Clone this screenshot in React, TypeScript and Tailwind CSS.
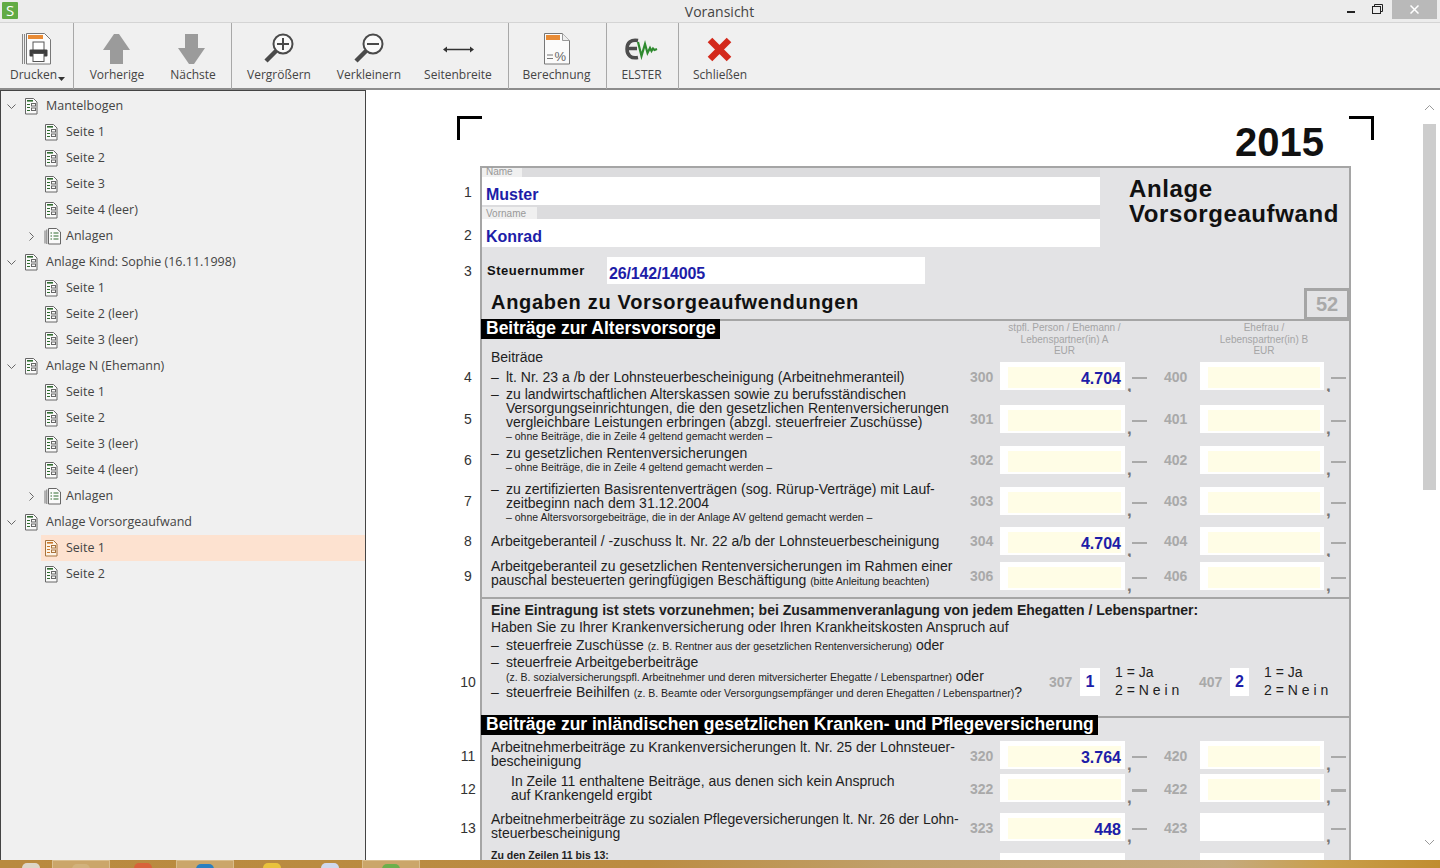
import React from "react";

const UI = "font-['Open_Sans',sans-serif]";

function PageIcon({ orange }: { orange?: boolean }) {
  const c = orange ? "#c9772a" : "#2f6b2f";
  const s = orange ? "#a8733c" : "#666";
  return (
    <svg width="14" height="17" viewBox="0 0 14 17" className="shrink-0">
      <path d="M1.5.5h8l3.5 3.5v12H1.5z" fill={orange ? "#fdf3e6" : "#fafafa"} stroke={s} />
      <rect x="3" y="2" width="6" height="1.6" fill={c} />
      <path d="M3 6.5h3M3 9.5h3M3 12.5h3" stroke={c} />
      <rect x="7.5" y="5.5" width="4" height="2.5" fill="none" stroke={s} />
      <rect x="7.5" y="10" width="4" height="2.5" fill="none" stroke={s} />
    </svg>
  );
}

function StackIcon() {
  return (
    <svg width="17" height="17" viewBox="0 0 17 17" className="shrink-0">
      <path d="M1 2.5v13M2.8 1.5v14.5" stroke="#777" fill="none" />
      <path d="M4.5.5h8l4 3.5v12h-12z" fill="#fafafa" stroke="#666" />
      <path d="M6.5 5h1.5M9.5 5h5M6.5 8h1.5M9.5 8h5M6.5 11h1.5M9.5 11h5" stroke="#2f6b2f" />
    </svg>
  );
}

function Chevron({ open }: { open?: boolean }) {
  return (
    <svg width="9" height="9" viewBox="0 0 9 9" className="shrink-0">
      <path d={open ? "M.5 2.5 4.5 6.5 8.5 2.5" : "M2.5.5 6.5 4.5 2.5 8.5"} fill="none" stroke="#666" strokeWidth="1" />
    </svg>
  );
}

type TreeRow = { label: string; kind: "root" | "page" | "group"; active?: boolean };

const tree: TreeRow[] = [
  { label: "Mantelbogen", kind: "root" },
  { label: "Seite 1", kind: "page" },
  { label: "Seite 2", kind: "page" },
  { label: "Seite 3", kind: "page" },
  { label: "Seite 4 (leer)", kind: "page" },
  { label: "Anlagen", kind: "group" },
  { label: "Anlage Kind: Sophie (16.11.1998)", kind: "root" },
  { label: "Seite 1", kind: "page" },
  { label: "Seite 2 (leer)", kind: "page" },
  { label: "Seite 3 (leer)", kind: "page" },
  { label: "Anlage N (Ehemann)", kind: "root" },
  { label: "Seite 1", kind: "page" },
  { label: "Seite 2", kind: "page" },
  { label: "Seite 3 (leer)", kind: "page" },
  { label: "Seite 4 (leer)", kind: "page" },
  { label: "Anlagen", kind: "group" },
  { label: "Anlage Vorsorgeaufwand", kind: "root" },
  { label: "Seite 1", kind: "page", active: true },
  { label: "Seite 2", kind: "page" },
];

function Sidebar() {
  return (
    <aside className={`w-[366px] shrink-0 border-x border-t border-[#444] bg-[#f0f0f0] pt-[2px] text-[12.5px] text-[#444] ${UI}`}>
      {tree.map((r, i) => (
        <div key={i} className="flex h-[26px] items-center">
          {r.kind === "root" && (
            <div className="flex items-center pl-[6px]">
              <Chevron open />
              <span className="ml-[8px]"><PageIcon /></span>
              <span className="ml-[8px]">{r.label}</span>
            </div>
          )}
          {r.kind === "page" && (
            <div className={`ml-[40px] flex h-full flex-1 items-center pl-[3px] ${r.active ? "bg-[#fde2d0]" : ""}`}>
              <PageIcon orange={r.active} />
              <span className="ml-[8px]">{r.label}</span>
            </div>
          )}
          {r.kind === "group" && (
            <div className="flex items-center pl-[26px]">
              <Chevron />
              <span className="ml-[8px]"><StackIcon /></span>
              <span className="ml-[5px]">{r.label}</span>
            </div>
          )}
        </div>
      ))}
    </aside>
  );
}

function Tool({ label, w, children, caret }: { label: string; w: string; children: React.ReactNode; caret?: boolean }) {
  return (
    <div className={`flex flex-col items-center ${w}`}>
      <div className="flex h-[37px] items-center justify-center">{children}</div>
      <div className="flex items-center text-[12px] leading-[16px] text-[#444]">
        {label}
        {caret && (
          <svg width="7" height="4" viewBox="0 0 7 4" className="ml-[1px] mt-[7px]"><path d="M0 0h7L3.5 4z" fill="#333" /></svg>
        )}
      </div>
    </div>
  );
}

const Sep = () => <div className="-mt-[7px] h-[66px] w-px bg-[#a8a8a8]" />;

function Magnifier({ plus }: { plus?: boolean }) {
  return (
    <svg width="32" height="32" viewBox="0 0 32 32">
      <circle cx="20" cy="11" r="9.5" fill="#fbfbfb" stroke="#4a4a4a" strokeWidth="2" />
      <path d="M13 18 3 28" stroke="#4a4a4a" strokeWidth="4.5" />
      <path d="M14 11h12" stroke="#4a4a4a" strokeWidth="2" />
      {plus && <path d="M20 5v12" stroke="#4a4a4a" strokeWidth="2" />}
    </svg>
  );
}

function Toolbar() {
  return (
    <div className={`flex h-[67px] shrink-0 border-b-2 border-[#8c8c8c] bg-[#f0f0f0] pt-[7px] ${UI}`}>
      <div className="w-[73px] pl-[2px]">
        <Tool label="Drucken" w="w-[71px]" caret>
          <svg width="31" height="32" viewBox="0 0 31 32" className="-ml-[3px]">
            <path d="M1.5 1v30M3.5 1v30" stroke="#888" fill="none" />
            <path d="M5.5.5h18l6 6v24.500h-24z" fill="#fbfbfb" stroke="#777" />
            <rect x="7" y="2" width="15" height="4" fill="#e88b35" />
            <rect x="12" y="9" width="11" height="9" fill="#fff" stroke="#555" />
            <rect x="8.500" y="16.500" width="18" height="7" rx="1" fill="#3d3d3d" />
            <rect x="12" y="20.500" width="11" height="8" fill="#fff" stroke="#555" />
          </svg>
        </Tool>
      </div>
      <Sep />
      <div className="flex w-[157px] pl-[5px]">
        <Tool label="Vorherige" w="w-[76px]">
          <svg width="27" height="30" viewBox="0 0 27 30" className="-ml-[2px]"><path d="M11 0h5l11 16h-7v14H7V16H0z" fill="#9b9b9b" /></svg>
        </Tool>
        <Tool label="Nächste" w="w-[76px]">
          <svg width="27" height="30" viewBox="0 0 27 30" className="-ml-[4px]"><path d="M7 0h13v14h7L16 30h-5L0 14h7z" fill="#9b9b9b" /></svg>
        </Tool>
      </div>
      <Sep />
      <div className="flex w-[276px] pl-[2px]">
        <Tool label="Vergrößern" w="w-[90px]"><Magnifier plus /></Tool>
        <Tool label="Verkleinern" w="w-[90px]"><Magnifier /></Tool>
        <Tool label="Seitenbreite" w="w-[88px]">
          <svg width="31" height="9" viewBox="0 0 31 9" className="mt-[2px]"><path d="M3 4.500h25" stroke="#333" strokeWidth="1.500" /><path d="M0 4.500 4 1.500v6zM31 4.500 27 1.500v6z" fill="#333" /></svg>
        </Tool>
      </div>
      <Sep />
      <div className="w-[97px]">
        <Tool label="Berechnung" w="w-[95px]">
          <svg width="26" height="32" viewBox="0 0 26 32">
            <path d="M.5.500h18l7 7v23.500H.5z" fill="#fbfbfb" stroke="#777" />
            <path d="M18.500.500v7h7" fill="#eee" stroke="#999" />
            <rect x="2" y="2" width="14" height="5" fill="#e88b35" />
            <path d="M3 22h6M3 25.500h6" stroke="#777" />
            <text x="10.500" y="28" fontSize="13" fontFamily="'Liberation Sans',sans-serif" fill="#666">%</text>
          </svg>
        </Tool>
      </div>
      <Sep />
      <div className="w-[71px]">
        <Tool label="ELSTER" w="w-[69px]">
          <svg width="33" height="22" viewBox="0 0 33 22" className="mt-[1px]">
            <path d="M13 2.500C6 1 2 5 2 11s4 10 11 8.500M3 10.500h9" fill="none" stroke="#4d4d4d" strokeWidth="3.500" />
            <path d="M13 4 16.500 18 20 6l2.500 9 2.500-5 1.500 3 1.500-2.500 1.500 1.500L32 11" fill="none" stroke="#2f8a2f" strokeWidth="2.200" />
          </svg>
        </Tool>
      </div>
      <Sep />
      <Tool label="Schließen" w="w-[82px]">
        <svg width="25" height="25" viewBox="0 0 25 25" className="-ml-[2px] mt-[1px]"><path d="M3 3 22 22M22 3 3 22" stroke="#d3291b" strokeWidth="6.500" /></svg>
      </Tool>
    </div>
  );
}

function TitleBar() {
  return (
    <div className={`flex h-[23px] shrink-0 items-start justify-between border-b border-[#d4d4d4] bg-[#ececec] ${UI}`}>
      <div className="ml-[2px] mt-[2px] flex h-[17px] w-[16px] items-center justify-center rounded-[1px] bg-[#62ab45] text-[15px] leading-none text-white">S</div>
      <div className="mt-[2px] pl-[74px] text-[14px] leading-[20px] text-[#444]">Voransicht</div>
      <div className="flex items-start">
        <div className="mt-[11px] h-[2px] w-[8px] bg-[#222]" />
        <svg width="11" height="10" viewBox="0 0 11 10" className="ml-[17px] mt-[4px]">
          <path d="M2.500 2V.5h8v7H8.500" fill="none" stroke="#222" />
          <rect x=".5" y="2.500" width="8" height="7" fill="#ececec" stroke="#222" strokeWidth="1" />
        </svg>
        <div className="ml-[9px] mr-[3px] flex h-[19px] w-[45px] items-center justify-center bg-[#b9b9b9]">
          <svg width="9" height="9" viewBox="0 0 9 9"><path d="M.5.5l8 8M8.500.5l-8 8" stroke="#fff" strokeWidth="1.500" /></svg>
        </div>
      </div>
    </div>
  );
}

const Body = ({ className = "", children }: { className?: string; children: React.ReactNode }) => (
  <div className={`w-[871px] shrink-0 border-x-2 border-[#a5a5a5] bg-[#e3e3e5] ${className}`}>{children}</div>
);

const Num = ({ n, cls }: { n: string; cls: string }) => (
  <div className={`flex h-[28px] w-[23px] shrink-0 items-center justify-center pr-px text-[14px] text-[#333] ${cls}`}>{n}</div>
);

function Field({ v, plain, w }: { v?: string; plain?: boolean; w: string }) {
  return (
    <div className={`h-[28px] shrink-0 bg-white pb-[2px] pl-[8px] pr-[4px] pt-[5px] ${w}`}>
      <div className={`flex h-full items-center justify-end pt-[2px] text-[16px] font-bold text-[#1d1da8] ${plain ? "" : "bg-[#fffde6]"}`}>{v}</div>
    </div>
  );
}

const Code = ({ c, w, nudge }: { c: string; w: string; nudge?: boolean }) => (
  <div className={`flex h-[28px] shrink-0 items-center text-[14px] font-bold text-[#a9a9a9] ${nudge ? "pt-[2px]" : ""} ${w}`}>{c}</div>
);

function Cents({ w, thick }: { w: string; thick?: boolean }) {
  return (
    <div className={`flex h-[28px] shrink-0 ${w}`}>
      <div className="mt-[20px] h-[8px] w-[7px] pl-[2px] text-[17px] font-bold leading-[8px] text-[#777]">,</div>
      <div className={`mt-[15px] w-[15px] bg-[#a9a9a9] ${thick ? "h-[3px]" : "h-[2px]"}`} />
    </div>
  );
}

function Pair({ c1, c2, v, plain2, thick, nudge }: { c1: string; c2: string; v?: string; plain2?: boolean; thick?: boolean; nudge?: boolean }) {
  return (
    <div className="flex">
      <Code c={c1} w="w-[30px]" nudge={nudge} />
      <Field v={v} w="w-[125px]" />
      <Cents w="w-[39px]" thick={thick} />
      <Code c={c2} w="w-[36px]" nudge={nudge} />
      <Field w="w-[124px]" plain={plain2} />
      <Cents w="w-[26px]" thick={thick} />
    </div>
  );
}

function Dash({ children }: { children: React.ReactNode }) {
  return (
    <div className="flex">
      <span className="w-[15px] shrink-0">–</span>
      <div>{children}</div>
    </div>
  );
}

const Small = ({ children }: { children: React.ReactNode }) => <span className="text-[10.5px]">{children}</span>;

const Note = ({ children }: { children: React.ReactNode }) => <div className="text-[10.5px]">{children}</div>;

type FormRow = {
  n: string;
  h: string;
  top: string;
  textTop: string;
  c1: string;
  c2: string;
  v?: string;
  plain2?: boolean;
  thick?: boolean;
  nudge?: boolean;
  text: React.ReactNode;
};

const rows1: FormRow[] = [
  {
    n: "4", h: "h-[30px]", top: "mt-0", textTop: "mt-[8px]", c1: "300", c2: "400", v: "4.704", nudge: true,
    text: <Dash>lt. Nr. 23 a /b der Lohnsteuerbescheinigung (Arbeitnehmeranteil)</Dash>,
  },
  {
    n: "5", h: "h-[52px]", top: "mt-[13px]", textTop: "-mt-[5px]", c1: "301", c2: "401",
    text: (
      <Dash>
        <div>zu landwirtschaftlichen Alterskassen sowie zu berufsständischen</div>
        <div>Versorgungseinrichtungen, die den gesetzlichen Rentenversicherungen</div>
        <div>vergleichbare Leistungen erbringen (abzgl. steuerfreier Zuschüsse)</div>
        <Note>– ohne Beiträge, die in Zeile 4 geltend gemacht werden –</Note>
      </Dash>
    ),
  },
  {
    n: "6", h: "h-[36px]", top: "mt-[2px]", textTop: "mt-[2px]", c1: "302", c2: "402",
    text: (
      <Dash>
        <div>zu gesetzlichen Rentenversicherungen</div>
        <Note>– ohne Beiträge, die in Zeile 4 geltend gemacht werden –</Note>
      </Dash>
    ),
  },
  {
    n: "7", h: "h-[44px]", top: "mt-[7px]", textTop: "mt-[2px]", c1: "303", c2: "403",
    text: (
      <Dash>
        <div>zu zertifizierten Basisrentenverträgen (sog. Rürup-Verträge) mit Lauf-</div>
        <div>zeitbeginn nach dem 31.12.2004</div>
        <Note>– ohne Altersvorsorgebeiträge, die in der Anlage AV geltend gemacht werden –</Note>
      </Dash>
    ),
  },
  {
    n: "8", h: "h-[33px]", top: "mt-[3px]", textTop: "mt-[10px]", c1: "304", c2: "404", v: "4.704",
    text: <div>Arbeitgeberanteil / -zuschuss lt. Nr. 22 a/b der Lohnsteuerbescheinigung</div>,
  },
  {
    n: "9", h: "h-[40px]", top: "mt-[5px]", textTop: "mt-[2px]", c1: "306", c2: "406",
    text: (
      <>
        <div>Arbeitgeberanteil zu gesetzlichen Rentenversicherungen im Rahmen einer</div>
        <div>pauschal besteuerten geringfügigen Beschäftigung <Small>(bitte Anleitung beachten)</Small></div>
      </>
    ),
  },
];

const rows2: FormRow[] = [
  {
    n: "11", h: "h-[33px]", top: "mt-0", textTop: "-mt-px", c1: "320", c2: "420", v: "3.764", nudge: true,
    text: (
      <>
        <div>Arbeitnehmerbeiträge zu Krankenversicherungen lt. Nr. 25 der Lohnsteuer-</div>
        <div>bescheinigung</div>
      </>
    ),
  },
  {
    n: "12", h: "h-[39px]", top: "mt-0", textTop: "mt-0", c1: "322", c2: "422", thick: true, nudge: true,
    text: (
      <div className="pl-[20px]">
        <div>In Zeile 11 enthaltene Beiträge, aus denen sich kein Anspruch</div>
        <div>auf Krankengeld ergibt</div>
      </div>
    ),
  },
  {
    n: "13", h: "h-[40px]", top: "mt-0", textTop: "-mt-px", c1: "323", c2: "423", v: "448", plain2: true, nudge: true,
    text: (
      <>
        <div>Arbeitnehmerbeiträge zu sozialen Pflegeversicherungen lt. Nr. 26 der Lohn-</div>
        <div>steuerbescheinigung</div>
      </>
    ),
  },
];

function Row({ r }: { r: FormRow }) {
  return (
    <div className={`flex ${r.h}`}>
      <Num n={r.n} cls={`${r.top} ${r.nudge ? "pt-[2px]" : ""}`} />
      <Body className="flex">
        <div className={`w-[488px] shrink-0 pl-[9px] leading-[14px] ${r.textTop}`}>{r.text}</div>
        <div className={r.top}>
          <Pair c1={r.c1} c2={r.c2} v={r.v} plain2={r.plain2} thick={r.thick} nudge={r.nudge} />
        </div>
      </Body>
    </div>
  );
}

const Bar = ({ children }: { children: React.ReactNode }) => (
  <div className="-ml-[1px] h-[20px] w-fit bg-black pl-[5px] pr-[4px] text-[17.5px] font-bold leading-[18px] text-white">{children}</div>
);

function YesNo({ code, v, boxW }: { code: string; v: string; boxW: string }) {
  return (
    <div className="flex">
      <div className="flex h-[28px] w-[31px] items-center text-[14px] font-bold text-[#a9a9a9]">{code}</div>
      <div className={`flex h-[28px] items-center justify-center bg-white text-[16px] font-bold text-[#1d1da8] ${boxW}`}>{v}</div>
      <div className="-mt-[5px] ml-[15px] w-[84px] text-[14px] leading-[18px]">
        <div>1 = Ja</div>
        <div>2 = N e i n</div>
      </div>
    </div>
  );
}

function Form() {
  return (
    <div className="font-['Liberation_Sans',Arial,sans-serif] text-[14px] text-[#1e1e1e]">
      {/* head */}
      <div className="flex">
        <div className="w-[23px] shrink-0">
          <Num n="1" cls="mt-[12px]" />
          <Num n="2" cls="mt-[15px]" />
          <Num n="3" cls="mt-[8px]" />
        </div>
        <Body className="h-[153px] border-t-2">
          <div className="flex">
            <div className="w-[618px] shrink-0 bg-[#dcdcde]">
              <div className="flex h-[9px]">
                <div className="h-full w-[40px] bg-[#f0f0f0] pl-[4px] text-[10px] leading-[8px] text-[#999]">Name</div>
              </div>
              <div className="flex h-[28px] items-center bg-white pl-[4px] pt-[7px] text-[16px] font-bold text-[#1d1da8]">Muster</div>
              <div className="mt-[2px] h-[12px] w-[55px] bg-[#f0f0f0] pl-[4px] text-[10px] leading-[14px] text-[#999]">Vorname</div>
              <div className="flex h-[28px] items-center bg-white pl-[4px] pt-[7px] text-[16px] font-bold text-[#1d1da8]">Konrad</div>
            </div>
            <div className="ml-[29px] mt-[8px] text-[24px] font-bold leading-[25px] tracking-[0.6px] text-[#111]">
              <div>Anlage</div>
              <div>Vorsorgeaufwand</div>
            </div>
          </div>
          <div className="mt-[10px] flex h-[27px] items-center">
            <div className="w-[125px] pl-[5px] pt-px text-[13px] font-bold tracking-[0.5px] text-[#111]">Steuernummer</div>
            <div className="flex h-full w-[318px] items-center bg-white pl-[2px] pt-[6px] text-[16px] font-bold tracking-[-0.15px] text-[#1d1da8]">26/142/14005</div>
          </div>
          <div className="mt-[4px] flex h-[31px] items-start justify-between">
            <div className="pl-[9px] text-[20px] font-bold leading-[28px] tracking-[0.7px] text-[#111]">Angaben zu Vorsorgeaufwendungen</div>
            <div className="-mr-[1px] flex h-[32px] w-[46px] items-center justify-center border-[3px] border-[#a5a5a5] text-[20px] font-bold text-[#a9a9a9]">52</div>
          </div>
        </Body>
      </div>

      {/* section: Altersvorsorge */}
      <div className="flex">
        <div className="w-[23px] shrink-0" />
        <Body className="flex h-[43px] border-t-2">
          <div className="w-[488px] shrink-0">
            <div className="-mt-[2px]">
              <Bar>Beiträge zur Altersvorsorge</Bar>
            </div>
            <div className="mt-[11px] pl-[9px] leading-[14px]">Beiträge</div>
          </div>
          <div className="flex pt-[1px] text-center text-[10px] leading-[11.5px] text-[#a5a5a5]">
            <div className="w-[32px]" />
            <div className="w-[125px]">
              <div className="whitespace-nowrap">stpfl. Person / Ehemann /</div>
              <div className="whitespace-nowrap">Lebenspartner(in) A</div>
              <div>EUR</div>
            </div>
            <div className="w-[75px]" />
            <div className="w-[124px]">
              <div>Ehefrau /</div>
              <div className="whitespace-nowrap">Lebenspartner(in) B</div>
              <div>EUR</div>
            </div>
          </div>
        </Body>
      </div>

      {rows1.map((r) => <Row key={r.n} r={r} />)}

      {/* section: Eintragung */}
      <div className="flex">
        <Num n="10" cls="mt-[71px]" />
        <Body className="flex h-[119px] border-t-2 pt-[3px]">
          <div className="w-[567px] shrink-0 pl-[9px] whitespace-nowrap">
            <div className="h-[17px] text-[14px] font-bold leading-[17px]">Eine Eintragung ist stets vorzunehmen; bei Zusammenveranlagung von jedem Ehegatten / Lebenspartner:</div>
            <div className="h-[17px] leading-[17px]">Haben Sie zu Ihrer Krankenversicherung oder Ihren Krankheitskosten Anspruch auf</div>
            <div className="h-[18px] leading-[18px]"><span className="inline-block w-[15px]">–</span>steuerfreie Zuschüsse <Small>(z. B. Rentner aus der gesetzlichen Rentenversicherung)</Small> oder</div>
            <div className="h-[17px] leading-[17px]"><span className="inline-block w-[15px]">–</span>steuerfreie Arbeitgeberbeiträge</div>
            <div className="h-[14px] pl-[15px] leading-[10px]"><Small>(z. B. sozialversicherungspfl. Arbeitnehmer und deren mitversicherter Ehegatte / Lebenspartner)</Small> oder</div>
            <div className="h-[16px] leading-[14px]"><span className="inline-block w-[15px]">–</span>steuerfreie Beihilfen <Small>(z. B. Beamte oder Versorgungsempfänger und deren Ehegatten / Lebenspartner)</Small>?</div>
          </div>
          <div className="mt-[66px] flex">
            <YesNo code="307" v="1" boxW="w-[20px]" />
            <YesNo code="407" v="2" boxW="w-[19px]" />
          </div>
        </Body>
      </div>

      {/* section: Kranken */}
      <div className="flex">
        <div className="w-[23px] shrink-0" />
        <Body className="relative z-10 h-[25px] border-t-2">
          <div className="-mt-[3px]">
            <Bar>Beiträge zur inländischen gesetzlichen Kranken- und Pflegeversicherung</Bar>
          </div>
        </Body>
      </div>

      {rows2.map((r) => <Row key={r.n} r={r} />)}

      <div className="flex h-[20px]">
        <div className="w-[23px] shrink-0" />
        <Body className="flex">
          <div className="-mt-[5px] w-[488px] shrink-0 pl-[9px] text-[10.5px] font-bold leading-[14px]">Zu den Zeilen 11 bis 13:</div>
          <div className="flex">
            <div className="w-[30px]" />
            <div className="h-[20px] w-[125px] bg-white" />
            <div className="w-[75px]" />
            <div className="h-[20px] w-[124px] bg-white" />
          </div>
        </Body>
      </div>
    </div>
  );
}

function Scrollbar() {
  return (
    <div className="flex w-[17px] shrink-0 flex-col">
      <svg width="13" height="7" viewBox="0 0 13 7" className="mt-[14px]"><path d="M2 6 6.500 1.500 11 6" fill="none" stroke="#999" /></svg>
      <div className="mt-[13px] h-[366px] w-[13px] bg-[#cdcdcd]" />
      <div className="flex-1" />
      <svg width="13" height="7" viewBox="0 0 13 7" className="mb-[14px]"><path d="M2 1 6.500 5.500 11 1" fill="none" stroke="#999" /></svg>
    </div>
  );
}

function Taskbar() {
  const Dot = ({ c, w }: { c: string; w: string }) => (
    <div className={`flex justify-center ${w}`}>
      <div className={`mt-[3px] h-[5px] w-[18px] rounded-t-full ${c}`} />
    </div>
  );
  const Btn = ({ c }: { c: string }) => (
    <div className="flex h-[8px] w-[58px] justify-center border-x border-t border-[#d9bd8c] bg-[#cba66a]">
      <div className={`mt-[3px] h-[5px] w-[18px] rounded-t-full ${c}`} />
    </div>
  );
  return (
    <div className="flex h-[8px] shrink-0 overflow-hidden bg-[linear-gradient(90deg,#b98a3f_0%,#bb8c42_45%,#c0a06a_62%,#c5aa7e_85%,#c99f4c_92%,#c08d30_100%)]">
      <Dot c="bg-[#ddd6c8]" w="w-[52px] pl-[10px]" />
      <Btn c="bg-[#d2b27c]" />
      <Dot c="bg-[#d8623a]" w="w-[66px]" />
      <Btn c="bg-[#2a7fc0]" />
      <Dot c="bg-[#e9c23c]" w="w-[64px] pl-[12px]" />
      <Dot c="bg-[#cfd8ee]" w="w-[64px]" />
      <Btn c="bg-[#6cb04c]" />
    </div>
  );
}

export default function App() {
  return (
    <div className="flex h-[868px] w-[1440px] flex-col overflow-hidden bg-white">
      <TitleBar />
      <Toolbar />
      <div className="flex min-h-0 flex-1">
        <Sidebar />
        <main className="min-w-0 flex-1 overflow-hidden pl-[91px] pt-[26px]">
          <div className="flex h-[50px] w-[917px]">
            <div className="h-[24px] w-[25px] border-l-[3px] border-t-[3px] border-black" />
            <div className="flex-1" />
            <div className="mt-[6px] font-['Liberation_Sans',Arial,sans-serif] text-[40px] font-bold leading-[40px] text-[#111]">2015</div>
            <div className="ml-[25px] h-[24px] w-[25px] border-r-[3px] border-t-[3px] border-black" />
          </div>
          <Form />
        </main>
        <Scrollbar />
      </div>
      <Taskbar />
    </div>
  );
}
